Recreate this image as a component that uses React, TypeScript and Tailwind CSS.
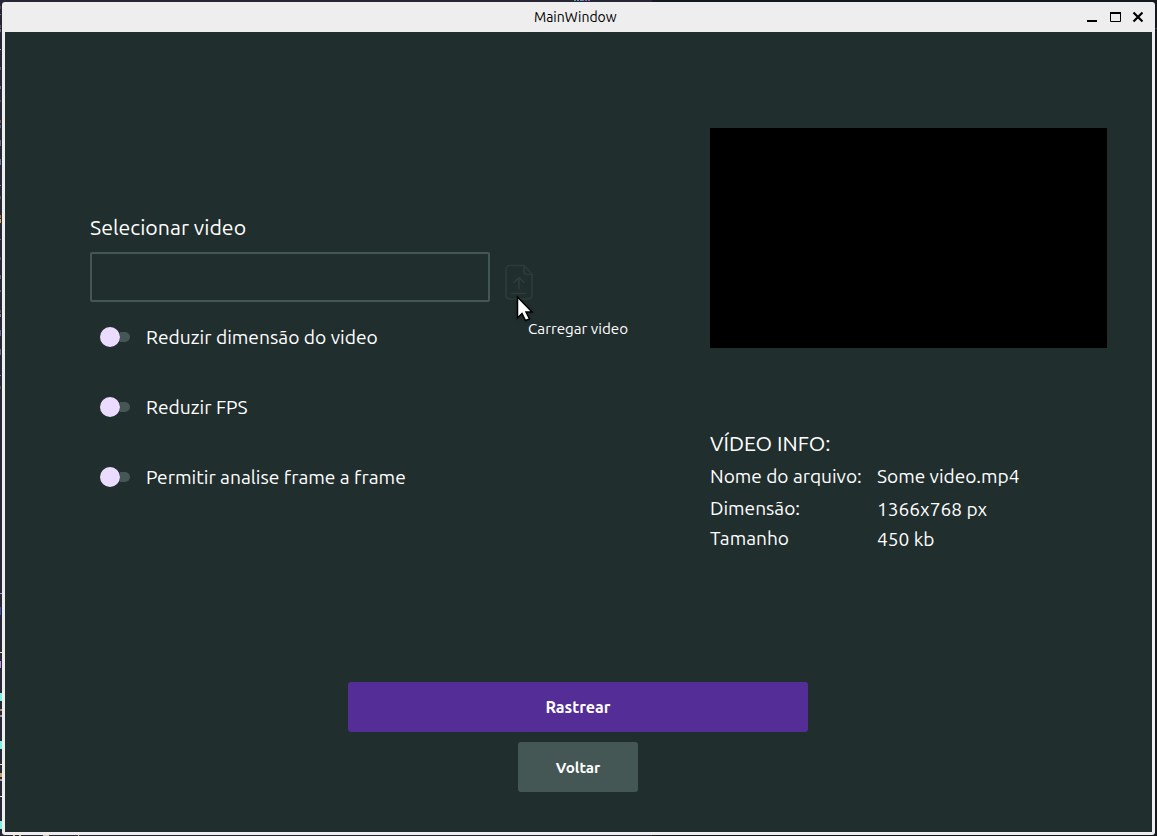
import React from "react";

type Speck = [y: number, h: number, color: string, w: number];

const leftSpecks: Speck[] = [
  [6, 3, "#5a4650", 1], [14, 1, "#6b6f80", 1], [25, 3, "#6a5048", 1], [29, 3, "#6d6f78", 1],
  [49, 1, "#b9a8c8", 1], [67, 3, "#59617a", 1], [86, 3, "#66708a", 1], [100, 2, "#6a4a44", 1],
  [120, 3, "#7a5648", 1], [125, 3, "#56607c", 1], [140, 6, "#5d6d8e", 1], [159, 6, "#6d7c9c", 1],
  [185, 1, "#7d8290", 1], [196, 3, "#6b4b40", 1], [215, 3, "#b0722e", 1], [219, 4, "#e0a350", 1],
  [239, 1, "#8b5aa8", 1], [257, 3, "#5c5068", 1], [275, 4, "#5c6c8c", 1], [290, 2, "#7a5648", 1],
  [310, 3, "#6b4b40", 1], [314, 3, "#77809a", 1], [330, 6, "#5d6d8e", 1], [349, 6, "#5d6d8e", 1],
  [375, 1, "#7d8290", 1], [386, 3, "#6b4b40", 1], [593, 1, "#b794d8", 2], [607, 8, "#4450a0", 1],
  [652, 1, "#f0dcb0", 2], [661, 7, "#c58be8", 1], [693, 8, "#7df0e4", 2], [709, 2, "#b58e70", 2],
  [715, 2, "#9a90a8", 2], [741, 8, "#7df0e4", 2], [764, 1, "#f0dcb0", 2], [773, 4, "#c99a68", 2],
  [779, 2, "#a8a0a8", 2], [796, 1, "#f4ead0", 2], [821, 8, "#7df0e4", 2],
];

function Desktop() {
  return (
    <svg className="absolute inset-0 h-full w-full" viewBox="0 0 1157 836" aria-hidden="true">
      <rect width="652" height="836" fill="#262635" />
      <rect x="652" width="505" height="836" fill="#15191f" />
      {leftSpecks.map(([y, h, color, w]) => (
        <rect key={y} x="0" y={y} width={w} height={h} fill={color} />
      ))}
      <path d="M574 .5h8" stroke="#4fa3a8" strokeDasharray="2 1" />
      <path d="M582 .5h8" stroke="#8a6ab0" strokeDasharray="2 1" />
      <rect x="1155" y="28" width="2" height="1" fill="#3a4148" />
      <path d="M13 835.5h2M19 835.5h2M43 835.5h6M78 835.5h1" stroke="#d8c8b0" />
    </svg>
  );
}

function TitleBar() {
  return (
    <header className="flex h-[30px] items-center">
      <span className="ml-[532px] w-[440px] whitespace-nowrap text-[14px] leading-[30px] text-black">
        MainWindow
      </span>
      <svg className="ml-auto mr-3 h-[16px] w-[60px]" viewBox="0 0 60 16" fill="none" stroke="#000">
        <path d="M4 12h10" strokeWidth="2" />
        <path d="M27.5 4v8.500h10V4" />
        <path d="M27 4h11" strokeWidth="2" />
        <path d="M50.500 3.500l9 9M59.500 3.500l-9 9" strokeWidth="2.2" />
      </svg>
    </header>
  );
}

function Toggle() {
  return (
    <span className="ml-[10px] flex h-5 w-[30px] shrink-0 items-center">
      <span className="h-5 w-5 rounded-full bg-[#ebdcff]" />
      <span className="h-[10px] w-[10px] rounded-r-full bg-[#445755]" />
    </span>
  );
}

function Option({ children }: { children: React.ReactNode }) {
  return (
    <label className="flex h-10 items-center gap-4 whitespace-nowrap text-[19.22px]">
      <Toggle />
      {children}
    </label>
  );
}

function UploadIcon() {
  return (
    <svg className="h-9 w-7" viewBox="0 0 28 36" fill="none" stroke="#2e3b3b" strokeWidth="1.7" strokeLinecap="round" strokeLinejoin="round">
      <path d="M19 1.500H5q-4 0-4 4v25.500q0 4 4 4h18q4 0 4-4V10z" />
      <path d="M19 1.500v6q0 3 3 3h5" />
      <path d="M14 24.500V13.500M9 18.500l5-5 5 5M7 29.500h14" />
    </svg>
  );
}

export default function App() {
  return (
    <div className="relative h-[836px] w-[1157px] overflow-hidden p-[2px] pb-px font-['Ubuntu','Noto_Sans',sans-serif]">
      <Desktop />
      <div className="relative h-[833px] w-[1153px] rounded-[3px] bg-[#eee]">
        <TitleBar />
        <main className="ml-[3px] flex h-[800px] w-[1147px] flex-col bg-[#212e2e] text-white">
          <div className="flex h-[650px]">
            <section className="w-[705px] pl-[85px] pt-[180px]">
              <h2 className="h-[30px] whitespace-nowrap text-[21.3px] leading-[30px]">
                Selecionar video
              </h2>
              <div className="mt-[10px] flex h-[50px]">
                <input className="h-[50px] w-[400px] rounded-[2px] border-2 border-[#445755] bg-transparent px-2 outline-none" />
                <button className="relative ml-[15px] mt-[12px] h-9 w-7">
                  <UploadIcon />
                  <svg className="absolute left-[11px] top-[31px] h-7 w-[19px] drop-shadow-sm" viewBox="0 0 19 28">
                    <path d="M1.500 2v21l4.500-4.500 3.500 7 4-1.500-3.500-7h6z" fill="#fff" stroke="#000" strokeWidth="1.5" />
                  </svg>
                  <span className="absolute left-[23px] top-[55px] whitespace-nowrap text-[15.2px] leading-[20px]">
                    Carregar video
                  </span>
                </button>
              </div>
              <div className="mt-[15px] flex flex-col gap-[30px]">
                <Option>Reduzir dimensão do video</Option>
                <Option>Reduzir FPS</Option>
                <Option>Permitir analise frame a frame</Option>
              </div>
            </section>
            <section className="pt-24">
              <div className="h-[220px] w-[397px] bg-black" />
              <h2 className="mt-[80px] h-[30px] whitespace-nowrap text-[21.3px] leading-[30px]">
                VÍDEO INFO:
              </h2>
              <div className="mt-[3px] flex whitespace-nowrap text-[19.1px] leading-[30px]">
                <dl className="w-[167px]">
                  <dt>Nome do arquivo:</dt>
                  <dt className="mt-[2px]">Dimensão:</dt>
                  <dt>Tamanho</dt>
                </dl>
                <dl>
                  <dd>Some video.mp4</dd>
                  <dd className="mt-[3px]">1366x768 px</dd>
                  <dd>450 kb</dd>
                </dl>
              </div>
            </section>
          </div>
          <div className="flex flex-col items-center gap-[10px] pr-px font-bold">
            <button className="h-[50px] w-[460px] rounded-[3px] bg-[#542d96] text-[16.2px]">Rastrear</button>
            <button className="h-[50px] w-[120px] rounded-[3px] bg-[#445755] pt-[2px] text-[15.2px]">Voltar</button>
          </div>
        </main>
      </div>
    </div>
  );
}
